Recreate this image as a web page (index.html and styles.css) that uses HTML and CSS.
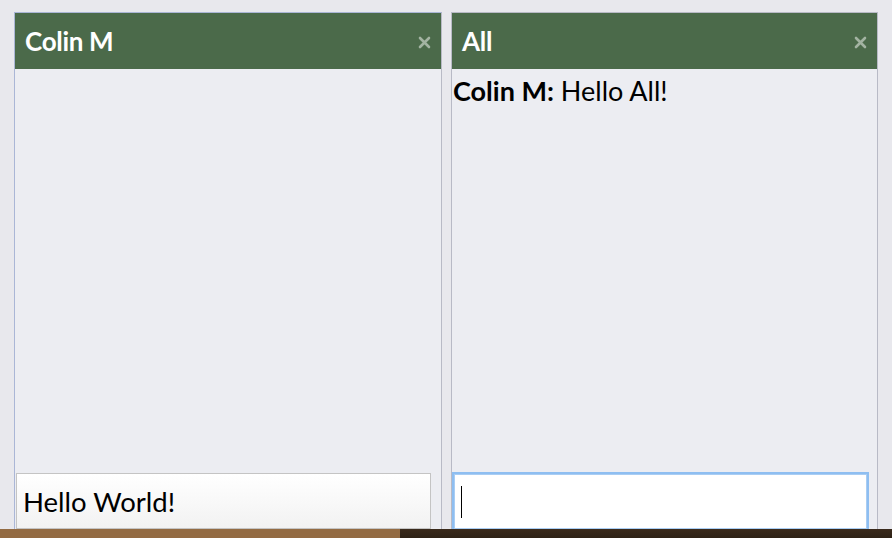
FILE: index.html
```html
<!DOCTYPE html>
<html>
<head>
<meta charset="utf-8">
<link rel="stylesheet" href="styles.css">
</head>
<body>
<div class="screen">
  <div class="panels">
    <section class="panel panel-left">
      <header class="panel-head">
        <span class="title">Colin M</span>
        <svg class="close" width="13" height="13" viewBox="0 0 13 13"><path d="M2 2L11 11M11 2L2 11" stroke="#a3b3a2" stroke-width="2.6" stroke-linecap="round"/></svg>
      </header>
      <div class="messages"></div>
      <div class="entry entry-idle">Hello World!</div>
    </section>
    <section class="panel panel-right">
      <header class="panel-head">
        <span class="title">All</span>
        <svg class="close" width="13" height="13" viewBox="0 0 13 13"><path d="M2 2L11 11M11 2L2 11" stroke="#a3b3a2" stroke-width="2.6" stroke-linecap="round"/></svg>
      </header>
      <div class="messages">
        <p class="msg"><b>Colin M:</b> Hello All!</p>
      </div>
      <div class="entry entry-focus"><span class="caret"></span></div>
    </section>
  </div>
  <div class="desktop">
    <span class="d-light"></span>
    <span class="d-dark"></span>
  </div>
</div>
</body>
</html>
```
FILE: styles.css
```css
html, body {
  margin: 0;
  padding: 0;
  background: #e8e8ed;
  font-family: Lato, "Open Sans", sans-serif;
}
.screen {
  width: 892px;
  height: 538px;
  display: flex;
  flex-direction: column;
  overflow: hidden;
}
.panels {
  flex: 1;
  display: flex;
  gap: 9px;
  padding: 12px 0 0 14px;
  min-height: 0;
}
.panel {
  display: flex;
  flex-direction: column;
  background: #ecedf2;
  border: 1px solid #b8bac6;
  border-bottom: none;
  box-sizing: border-box;
}
.panel-left {
  width: 428px;
  border-left-color: #aab6d6;
  border-top-color: #aab6d6;
}
.panel-right {
  width: 427px;
}
.panel-head {
  height: 56px;
  background: #4b6a4a;
  display: flex;
  align-items: center;
  justify-content: space-between;
  padding: 0 10px 0 10px;
  flex: none;
}
.title {
  color: #fff;
  font-weight: 700;
  font-size: 26px;
  letter-spacing: -0.3px;
}
.close {
  display: block;
  margin-top: 2px;
}
.messages {
  flex: 1;
  padding: 6px 0 0 1px;
}
.msg {
  margin: 0;
  font-size: 27px;
  color: #000;
  line-height: 32px;
}
.entry {
  height: 56px;
  box-sizing: border-box;
  flex: none;
  display: flex;
  align-items: center;
  font-size: 27.5px;
  color: #000;
}
.entry-idle {
  margin: 0 10px 0 1px;
  border: 1px solid #c4c4c4;
  background: linear-gradient(to bottom, #ffffff, #f2f2f2);
  padding: 0 6px;
}
.entry-focus {
  margin: 0 10px 0 2px;
  height: 55px;
  background: #fff;
  border: 1px solid #a9cdf3;
  box-shadow: 0 0 0 2px #8ebef1;
  padding: 0 6px;
}
.caret {
  width: 1px;
  height: 32px;
  background: #000;
}
.desktop {
  height: 9px;
  flex: none;
  display: flex;
}
.d-light {
  width: 400px;
  background: #936b43;
}
.d-dark {
  flex: 1;
  background: linear-gradient(to bottom, #3a2a1c, #2e2216);
}
```
